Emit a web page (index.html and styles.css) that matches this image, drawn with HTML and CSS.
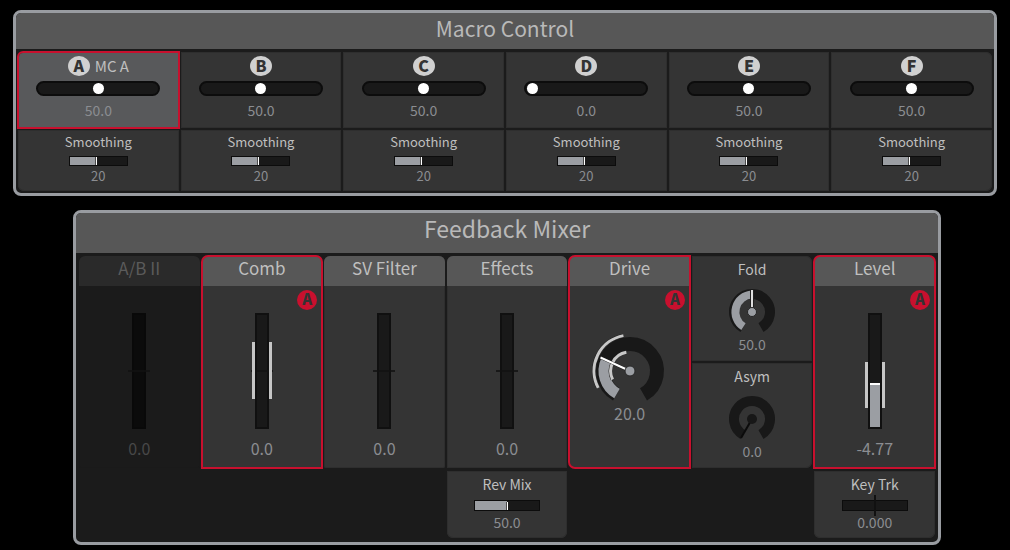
FILE: index.html
```html
<!DOCTYPE html>
<html lang="en">
<head>
<meta charset="utf-8">
<meta name="viewport" content="width=device-width, initial-scale=1">
<title>Macro Control and Feedback Mixer</title>
<link rel="stylesheet" href="styles.css">
</head>
<body>
<section class="panel macro">
  <h1 class="panel-title">Macro Control</h1>
  <div class="macro-grid">
    <div class="cell macro-cell selected">
      <label class="macro-name" for="mc-a"><span class="badge">A</span>MC A</label>
      <input class="pill" id="mc-a" type="range" min="0" max="100" value="50">
      <output class="value" for="mc-a">50.0</output>
    </div>
    <div class="cell macro-cell">
      <label class="macro-name" for="mc-b"><span class="badge">B</span></label>
      <input class="pill" id="mc-b" type="range" min="0" max="100" value="50">
      <output class="value" for="mc-b">50.0</output>
    </div>
    <div class="cell macro-cell">
      <label class="macro-name" for="mc-c"><span class="badge">C</span></label>
      <input class="pill" id="mc-c" type="range" min="0" max="100" value="50">
      <output class="value" for="mc-c">50.0</output>
    </div>
    <div class="cell macro-cell">
      <label class="macro-name" for="mc-d"><span class="badge">D</span></label>
      <input class="pill" id="mc-d" type="range" min="0" max="100" value="0">
      <output class="value" for="mc-d">0.0</output>
    </div>
    <div class="cell macro-cell">
      <label class="macro-name" for="mc-e"><span class="badge">E</span></label>
      <input class="pill" id="mc-e" type="range" min="0" max="100" value="50">
      <output class="value" for="mc-e">50.0</output>
    </div>
    <div class="cell macro-cell round-tr">
      <label class="macro-name" for="mc-f"><span class="badge">F</span></label>
      <input class="pill" id="mc-f" type="range" min="0" max="100" value="50">
      <output class="value" for="mc-f">50.0</output>
    </div>
    <div class="cell smooth-cell round-bl">
      <label class="label" for="sm-a">Smoothing</label>
      <input class="bar short" id="sm-a" type="range" min="0" max="44" value="20" style="--fill:45%">
      <output class="value" for="sm-a">20</output>
    </div>
    <div class="cell smooth-cell">
      <label class="label" for="sm-b">Smoothing</label>
      <input class="bar short" id="sm-b" type="range" min="0" max="44" value="20" style="--fill:45%">
      <output class="value" for="sm-b">20</output>
    </div>
    <div class="cell smooth-cell">
      <label class="label" for="sm-c">Smoothing</label>
      <input class="bar short" id="sm-c" type="range" min="0" max="44" value="20" style="--fill:45%">
      <output class="value" for="sm-c">20</output>
    </div>
    <div class="cell smooth-cell">
      <label class="label" for="sm-d">Smoothing</label>
      <input class="bar short" id="sm-d" type="range" min="0" max="44" value="20" style="--fill:45%">
      <output class="value" for="sm-d">20</output>
    </div>
    <div class="cell smooth-cell">
      <label class="label" for="sm-e">Smoothing</label>
      <input class="bar short" id="sm-e" type="range" min="0" max="44" value="20" style="--fill:45%">
      <output class="value" for="sm-e">20</output>
    </div>
    <div class="cell smooth-cell round-br">
      <label class="label" for="sm-f">Smoothing</label>
      <input class="bar short" id="sm-f" type="range" min="0" max="44" value="20" style="--fill:45%">
      <output class="value" for="sm-f">20</output>
    </div>
  </div>
</section>

<section class="panel mixer">
  <h1 class="panel-title large">Feedback Mixer</h1>
  <div class="mixer-grid">
    <div class="cell strip inactive">
      <label class="strip-title" for="ab">A/B II</label>
      <div class="fader centered"><input class="vbar plain" id="ab" type="range" min="-100" max="100" value="0"></div>
      <output class="value big" for="ab">0.0</output>
    </div>
    <div class="cell strip assigned">
      <label class="strip-title" for="comb">Comb</label>
      <span class="badge red">A</span>
      <div class="fader centered"><input class="vbar plain" id="comb" type="range" min="-100" max="100" value="0"><span class="range comb-range"></span></div>
      <output class="value big" for="comb">0.0</output>
    </div>
    <div class="cell strip">
      <label class="strip-title" for="svf">SV Filter</label>
      <div class="fader centered"><input class="vbar plain" id="svf" type="range" min="-100" max="100" value="0"></div>
      <output class="value big" for="svf">0.0</output>
    </div>
    <div class="cell strip square-bottom">
      <label class="strip-title" for="fx">Effects</label>
      <div class="fader centered"><input class="vbar plain" id="fx" type="range" min="-100" max="100" value="0"></div>
      <output class="value big" for="fx">0.0</output>
    </div>
    <div class="cell strip assigned drive">
      <label class="strip-title" for="drive">Drive</label>
      <span class="badge red">A</span>
      <div class="knob">
        <svg width="76" height="68" viewBox="0 0 76 68" fill="none" aria-hidden="true">
          <path d="M24.500 61.383 A27 27 0 1 1 51.500 61.383" stroke="#181818" stroke-width="14"/>
          <path d="M25 60.517 A26 26 0 0 1 14.436 27.012" stroke="#9b9ea3" stroke-width="11"/>
          <path d="M6.210 54.901 A36 36 0 0 1 31.440 2.604" stroke="#202020" stroke-width="4"/>
          <path d="M6.210 54.901 A36 36 0 0 1 31.440 2.604" stroke="#c8c8c8" stroke-width="3"/>
          <path d="M20.632 46.473 A19 19 0 0 1 34.374 19.349" stroke="#292929" stroke-width="4"/>
          <path d="M20.632 46.473 A19 19 0 0 1 34.374 19.349" stroke="#c8c8c8" stroke-width="3"/>
          <path d="M38 38 L8.500 24.500" stroke="#151515" stroke-width="3"/>
          <path d="M38 38 L8.500 24.500" stroke="#fff" stroke-width="2"/>
          <circle cx="38" cy="38" r="5" fill="#9b9ea3" stroke="#292929"/>
        </svg>
        <input id="drive" type="range" min="0" max="50" value="20">
      </div>
      <output class="value big" for="drive">20.0</output>
    </div>
    <div class="stack">
      <div class="cell small-knob round-tr">
        <label class="label" for="fold">Fold</label>
        <div class="knob">
          <svg width="52" height="46" viewBox="0 0 52 46" fill="none" aria-hidden="true">
            <path d="M17 41.588 A18 18 0 1 1 35 41.588" stroke="#181818" stroke-width="10"/>
            <path d="M17.500 40.722 A17.500 17.500 0 0 1 26 8.500" stroke="#9b9ea3" stroke-width="8"/>
            <path d="M26 25 V4" stroke="#202020" stroke-width="4"/>
            <path d="M26 25 V4" stroke="#dedede" stroke-width="2"/>
            <circle cx="26" cy="26" r="4.500" fill="#9b9ea3" stroke="#252525"/>
          </svg>
          <input id="fold" type="range" min="0" max="100" value="50">
        </div>
        <output class="value" for="fold">50.0</output>
      </div>
      <div class="cell small-knob round-br">
        <label class="label" for="asym">Asym</label>
        <div class="knob">
          <svg width="52" height="46" viewBox="0 0 52 46" fill="none" aria-hidden="true">
            <path d="M17 41.588 A18 18 0 1 1 35 41.588" stroke="#181818" stroke-width="10"/>
            <path d="M26 26 L15 45" stroke="#0b0b0b" stroke-width="2"/>
            <circle cx="26" cy="26" r="5" fill="#171717"/>
          </svg>
          <input id="asym" type="range" min="0" max="100" value="0">
        </div>
        <output class="value" for="asym">0.0</output>
      </div>
    </div>
    <div class="cell strip assigned">
      <label class="strip-title" for="level">Level</label>
      <span class="badge red">A</span>
      <div class="fader"><input class="vbar filled" id="level" type="range" min="0" max="100" value="38" style="--fill:38%"><span class="range level-range"></span></div>
      <output class="value big" for="level">-4.77</output>
    </div>
    <div class="cell sub rev">
      <label class="label" for="rev">Rev Mix</label>
      <div class="bar-wrap"><input class="bar" id="rev" type="range" min="0" max="100" value="50" style="--fill:50%"></div>
      <output class="value" for="rev">50.0</output>
    </div>
    <div class="cell sub key">
      <label class="label" for="key">Key Trk</label>
      <div class="bar-wrap centered"><input class="bar plain" id="key" type="range" min="-100" max="100" value="0" style="--fill:0%"></div>
      <output class="value" for="key">0.000</output>
    </div>
  </div>
</section>
</body>
</html>
```
FILE: styles.css
```css
:root {
  --frame: #999ca1;
  --gap: #1b1b1b;
  --cell: #343434;
  --head: #575757;
  --red: #c8102e;
  --metal: #9b9ea3;
  --text: #bfbfbf;
  --muted: #8b8d91;
}

* { box-sizing: border-box; }

body {
  margin: 0;
  padding: 10px 13px 5px;
  background: #000;
  color: var(--text);
  font-family: "Noto Sans CJK SC", "Noto Sans", sans-serif;
  font-size: 13px;
  line-height: 16px;
}

.panel {
  border: 3px solid var(--frame);
  border-radius: 8px;
  background: var(--gap);
  overflow: hidden;
}

.mixer { margin: 14px 56px 0 60px; }

.panel-title {
  margin: 0;
  background: var(--head);
  color: #b9b9b9;
  font-size: 21px;
  font-weight: 400;
  line-height: 30px;
  padding-bottom: 6px;
  text-align: center;
}

.panel-title.large {
  font-size: 23px;
  padding-bottom: 10px;
}

.macro-grid {
  display: grid;
  grid-template-columns: repeat(6, 1fr);
  gap: 2px;
  padding: 3px 2px 2px;
}

.cell {
  display: flex;
  flex-direction: column;
  align-items: center;
  background: var(--cell);
  box-shadow: inset 0 0 0 1px #2e2e2e;
  min-width: 0;
}

.round-tr { border-top-right-radius: 6px; }
.round-br { border-bottom-right-radius: 6px; }
.round-bl { border-bottom-left-radius: 6px; }

.macro-cell { padding: 4px 0 10px; }

.selected {
  background: #58595b;
  border-top-left-radius: 5px;
}

.selected, .assigned {
  outline: 2px solid var(--red);
  outline-offset: -1px;
}

.macro-name {
  display: flex;
  align-items: center;
  gap: 5px;
  height: 20px;
  margin-bottom: 5px;
  font-size: 15px;
}

.badge {
  width: 22px;
  height: 20px;
  border-radius: 50%;
  background: #d0d0d0;
  color: #333;
  font-size: 16px;
  font-weight: 900;
  line-height: 18px;
  text-align: center;
}

.badge.red {
  position: absolute;
  top: 34px;
  right: 5px;
  width: 20px;
  background: var(--red);
  font-size: 15px;
}

.value { color: var(--muted); font-size: 14px; }
.smooth-cell .value { font-size: 13px; }
.value.big { font-size: 16px; line-height: 20px; }

input {
  appearance: none;
  display: block;
  margin: 0;
}

.pill {
  width: 124px;
  height: 15px;
  margin-bottom: 6px;
  padding: 0 1px;
  border: 2px solid #0c0c0c;
  border-radius: 8px;
  background: #191919;
}

.pill::-webkit-slider-thumb {
  appearance: none;
  width: 11px;
  height: 11px;
  border-radius: 50%;
  background: #fff;
}

.smooth-cell { padding: 4px 0 7px; }
.smooth-cell .label { margin-bottom: 6px; }

.bar {
  width: 66px;
  height: 11px;
  border: 1px solid #0c0c0c;
  background: linear-gradient(to right, var(--metal) var(--fill), #191919 var(--fill));
}

.bar.short {
  width: 59px;
  height: 10px;
  margin-bottom: 2px;
}

.bar::-webkit-slider-thumb {
  appearance: none;
  width: 2px;
  height: 8px;
  border-left: 1px solid #4a4a4a;
  background: #fff;
}

.plain::-webkit-slider-thumb { opacity: 0; }

.mixer-grid {
  display: grid;
  grid-template-columns: repeat(7, 1fr);
  column-gap: 2px;
  row-gap: 3px;
  padding: 3px 3px 4px;
}

.strip {
  position: relative;
  padding-bottom: 10px;
  border-radius: 6px 6px 2px 2px;
}

.assigned { border-radius: 6px 6px 0 0; }
.drive { border-radius: 6px 0 0 6px; }
.square-bottom { border-radius: 6px 6px 0 0; }

.strip-title {
  align-self: stretch;
  padding-bottom: 6px;
  border-radius: 6px 6px 0 0;
  background: var(--head);
  font-size: 17px;
  line-height: 24px;
  text-align: center;
}

.drive .strip-title { border-top-right-radius: 0; }

.inactive {
  background: var(--gap);
  box-shadow: inset 0 0 0 1px #1a1a1a;
}

.inactive .strip-title { background: #2a2a2a; color: #5b5b5b; }
.inactive .value { color: #484848; }

.fader {
  position: relative;
  margin: 27px 0 9px;
}

.vbar {
  writing-mode: vertical-lr;
  direction: rtl;
  width: 14px;
  height: 116px;
  border: 2px solid #101010;
  background: linear-gradient(to top, var(--metal) var(--fill, 0%), #191919 var(--fill, 0%));
}

.inactive .vbar { background: #0b0b0b; border-color: #090909; }

.vbar::-webkit-slider-thumb {
  appearance: none;
  width: 10px;
  height: 2px;
  background: #fff;
}

.fader.centered::after {
  content: "";
  position: absolute;
  top: 57px;
  left: -4px;
  right: -4px;
  height: 2px;
  background: #111;
  opacity: .8;
}

.range {
  position: absolute;
  left: -3px;
  right: -3px;
  z-index: 1;
  border: solid #c6c6c6;
  border-width: 0 3px;
  pointer-events: none;
}

.comb-range { top: 29px; bottom: 30px; }
.level-range { top: 49px; bottom: 21px; }

.knob { position: relative; }
.knob svg { display: block; }

.knob input {
  position: absolute;
  inset: 0;
  width: 100%;
  height: 100%;
  opacity: 0;
}

.drive .knob { margin: 47px 0 2px; }

.stack {
  display: grid;
  grid-template-rows: 1fr 1fr;
  gap: 2px;
}

.small-knob { padding: 5px 0 9px; }
.small-knob .knob { margin: 9px 0 4px; }

.stack .label, .sub .label { font-size: 14px; }

.sub {
  padding: 5px 0 8px;
  border-radius: 0 0 6px 6px;
}

.rev { grid-column: 4; }
.key { grid-column: 7; }

.bar-wrap {
  position: relative;
  margin: 8px 0 3px;
}

.bar-wrap.centered::after {
  content: "";
  position: absolute;
  top: -5px;
  bottom: -5px;
  left: 32px;
  width: 2px;
  background: #111;
}
```
